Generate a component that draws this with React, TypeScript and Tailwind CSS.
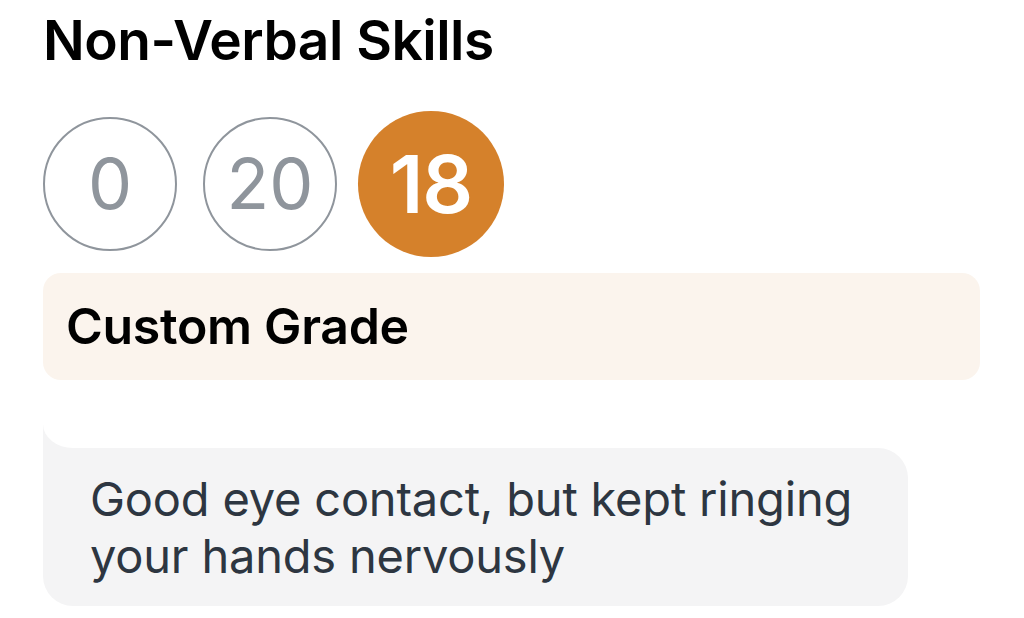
const grades = [
  { value: "0", selected: false },
  { value: "20", selected: false },
  { value: "18", selected: true },
];

function GradeCircle({ value, selected }: { value: string; selected: boolean }) {
  if (selected) {
    return (
      <div className="w-[134px] h-[134px] rounded-full bg-[#d5812b] flex items-center justify-center scale-[1.09] ml-[1px]">
        <span className="text-white text-[73px] font-semibold leading-none tracking-[-1px]">{value}</span>
      </div>
    );
  }
  return (
    <div className="w-[134px] h-[134px] rounded-full border-2 border-[#8f959c] flex items-center justify-center">
      <span className="text-[#8f959c] text-[70px] font-normal leading-none">{value}</span>
    </div>
  );
}

export default function App() {
  return (
    <div
      className="w-[1024px] h-[618px] bg-white overflow-hidden pl-[43px] pt-[8px]"
      style={{ fontFamily: "Inter, 'Noto Sans', sans-serif" }}
    >
      <h2 className="text-[55px] font-semibold leading-[64px] text-black tracking-[-0.5px]">
        Non-Verbal Skills
      </h2>

      <div className="flex gap-[26px] mt-[45px]">
        {grades.map((g) => (
          <GradeCircle key={g.value} value={g.value} selected={g.selected} />
        ))}
      </div>

      <div className="mt-[22px] w-[937px] h-[107px] rounded-[18px] bg-[#fbf4ed] flex items-center pl-[23px]">
        <span className="text-[50px] font-semibold text-black tracking-[-0.3px]">Custom Grade</span>
      </div>

      <div className="relative mt-[68px] w-[865px]">
        <div className="absolute left-0 -top-[24px] w-[40px] h-[24px] bg-[#f4f4f5]">
          <div className="w-full h-full bg-white rounded-bl-[30px_24px]" />
        </div>
        <div className="rounded-[30px] rounded-tl-none bg-[#f4f4f5] px-[47px] py-[22px]">
          <p className="text-[47px] leading-[57px] text-[#2d3641] tracking-[-0.2px]">
            Good eye contact, but kept ringing your hands nervously
          </p>
        </div>
      </div>
    </div>
  );
}
